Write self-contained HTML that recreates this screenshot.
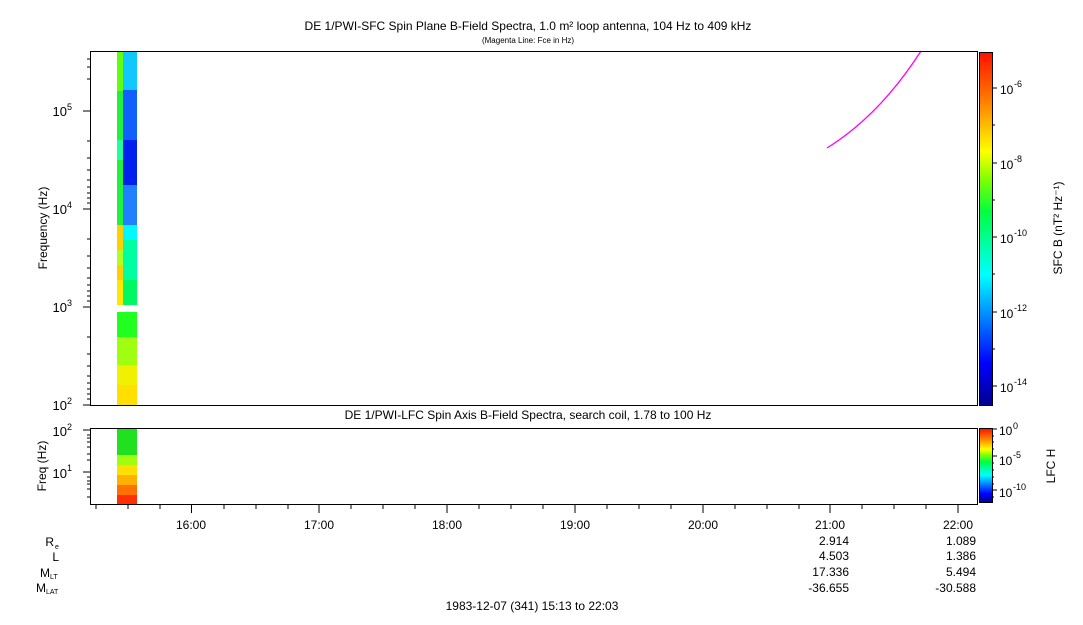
<!DOCTYPE html>
<html><head><style>
body{margin:0;background:#fff;width:1083px;height:620px;overflow:hidden}
svg text{font-family:"Liberation Sans",sans-serif;fill:#000}
</style></head><body>
<svg width="1083" height="620" xmlns="http://www.w3.org/2000/svg">
<defs>
<linearGradient id="jet" x1="0" y1="1" x2="0" y2="0">
<stop offset="0" stop-color="#00008f"/>
<stop offset="0.12" stop-color="#0000ff"/>
<stop offset="0.37" stop-color="#00ffff"/>
<stop offset="0.55" stop-color="#00ff40"/>
<stop offset="0.64" stop-color="#80ff00"/>
<stop offset="0.72" stop-color="#ffff00"/>
<stop offset="0.86" stop-color="#ff8000"/>
<stop offset="1" stop-color="#ff1000"/>
</linearGradient>
</defs>
<text x="528" y="30" font-size="12" text-anchor="middle">DE 1/PWI-SFC  Spin Plane B-Field Spectra, 1.0 m² loop antenna, 104 Hz to 409 kHz</text>
<text x="528" y="43" font-size="8" text-anchor="middle">(Magenta Line: Fce in Hz)</text>

<rect x="117" y="51" width="6" height="254" fill="#20f040"/>
<rect x="117" y="51" width="6" height="40" fill="#60ff10"/>
<rect x="117" y="140" width="6" height="20" fill="#20ffa0"/>
<rect x="117" y="225" width="6" height="80" fill="#ffd000"/>
<rect x="117" y="250" width="6" height="15" fill="#b0ff20"/>
<rect x="117" y="280" width="6" height="25" fill="#ffe800"/>
<rect x="123" y="51" width="14" height="50" fill="#10c8ff"/>
<rect x="123" y="90" width="14" height="70" fill="#1060ff"/>
<rect x="123" y="140" width="14" height="45" fill="#0020f0"/>
<rect x="123" y="185" width="14" height="40" fill="#2080ff"/>
<rect x="123" y="225" width="14" height="15" fill="#00f8ff"/>
<rect x="123" y="240" width="14" height="65" fill="#00ffa0"/>
<rect x="123" y="280" width="14" height="25" fill="#00f860"/>
<rect x="117" y="312" width="20" height="93" fill="#a0ff10"/>
<rect x="117" y="312" width="20" height="25" fill="#20ff20"/>
<rect x="117" y="365" width="20" height="40" fill="#f0f000"/>
<rect x="117" y="385" width="20" height="20" fill="#ffe000"/>
<path d="M827 148 Q880 115 921 51" stroke="#ff00ff" stroke-width="1.3" fill="none"/>
<rect x="90.5" y="51.5" width="887" height="354" fill="none" stroke="#000"/>
<g font-size="13">
<text x="67" y="116" text-anchor="end">10</text><text x="67" y="110" font-size="9">5</text>
<text x="67" y="214" text-anchor="end">10</text><text x="67" y="208" font-size="9">4</text>
<text x="67" y="312" text-anchor="end">10</text><text x="67" y="306" font-size="9">3</text>
<text x="67" y="410" text-anchor="end">10</text><text x="67" y="404" font-size="9">2</text>
</g>
<text x="0" y="0" font-size="12" transform="translate(47 228) rotate(-90)" text-anchor="middle">Frequency (Hz)</text>
<g stroke="#000">
<path d="M90 111h-7M90 209h-7M90 307h-7M90 405h-7"/>
<path d="M90 59h-3M90 67h-3M90 79h-3M90 141h-3M90 158h-3M90 170h-3M90 180h-3M90 187h-3M90 193h-3M90 198h-3M90 203h-3M90 239h-3M90 256h-3M90 268h-3M90 278h-3M90 285h-3M90 291h-3M90 296h-3M90 301h-3M90 337h-3M90 354h-3M90 366h-3M90 376h-3M90 383h-3M90 389h-3M90 394h-3M90 399h-3"/>
</g>
<text x="528" y="419" font-size="12" text-anchor="middle">DE 1/PWI-LFC  Spin Axis B-Field Spectra, search coil, 1.78 to 100 Hz</text>

<rect x="117" y="428" width="20" height="76" fill="#20e020"/>
<rect x="117" y="455" width="20" height="10" fill="#a0ff10"/>
<rect x="117" y="465" width="20" height="10" fill="#ffe000"/>
<rect x="117" y="475" width="20" height="10" fill="#ffb000"/>
<rect x="117" y="485" width="20" height="10" fill="#ff7000"/>
<rect x="117" y="495" width="20" height="9" fill="#ff3000"/>
<rect x="90.5" y="428.5" width="887" height="76" fill="none" stroke="#000"/>
<g font-size="13">
<text x="67" y="436" text-anchor="end">10</text><text x="67" y="430" font-size="9">2</text>
<text x="67" y="478" text-anchor="end">10</text><text x="67" y="471" font-size="9">1</text>
</g>
<text x="0" y="0" font-size="12" transform="translate(46 466) rotate(-90)" text-anchor="middle">Freq (Hz)</text>
<g stroke="#000"><path d="M90 430h-7M90 472h-7M90 435h-3M90 438h-3M90 442h-3M90 447h-3M90 454h-3M90 460h-3M90 477h-3M90 481h-3M90 484h-3M90 489h-3M90 497h-3"/></g>

<g stroke="#000">
<path d="M96 505v4M128 505v4M160 505v4M191.5 505v8M224 505v4M256 505v4M288 505v4M319 505v8M351 505v4M383 505v4M415 505v4M447 505v8M479 505v4M511 505v4M543 505v4M575 505v8M607 505v4M639 505v4M671 505v4M703 505v8M735 505v4M767 505v4M799 505v4M830 505v8M862 505v4M894 505v4M926 505v4M958 505v8"/>
</g>
<g font-size="12" text-anchor="middle">
<text x="191" y="529">16:00</text><text x="319" y="529">17:00</text><text x="447" y="529">18:00</text><text x="575" y="529">19:00</text><text x="703" y="529">20:00</text><text x="830" y="529">21:00</text><text x="958" y="529">22:00</text>
</g>
<g font-size="12">
<text x="54" y="546" text-anchor="end">R</text><text x="55" y="549" font-size="7">e</text>
<text x="59" y="561" text-anchor="end">L</text>
<text x="50" y="577" text-anchor="end">M</text><text x="50" y="579" font-size="7">LT</text>
<text x="46" y="592" text-anchor="end">M</text><text x="46" y="594" font-size="7">LAT</text>
</g>
<g font-size="12" text-anchor="end">
<text x="849" y="545">2.914</text><text x="976" y="545">1.089</text>
<text x="849" y="560">4.503</text><text x="976" y="560">1.386</text>
<text x="849" y="576">17.336</text><text x="976" y="576">5.494</text>
<text x="849" y="592">-36.655</text><text x="976" y="592">-30.588</text>
</g>
<text x="532" y="610" font-size="12" text-anchor="middle">1983-12-07 (341) 15:13 to 22:03</text>

<rect x="979.5" y="52.5" width="13" height="353" fill="url(#jet)" stroke="#000"/>
<g stroke="#000"><path d="M992 88h5M992 125h3M992 163h5M992 200h3M992 237h5M992 274h3M992 312h5M992 349h3M992 386h5"/></g>
<g font-size="12">
<text x="1000" y="94">10</text><text x="1014" y="87" font-size="9">-6</text>
<text x="1000" y="169">10</text><text x="1014" y="162" font-size="9">-8</text>
<text x="1000" y="243">10</text><text x="1014" y="236" font-size="9">-10</text>
<text x="1000" y="318">10</text><text x="1014" y="311" font-size="9">-12</text>
<text x="1000" y="392">10</text><text x="1014" y="385" font-size="9">-14</text>
</g>
<text x="0" y="0" font-size="12" transform="translate(1062 228) rotate(-90)" text-anchor="middle">SFC B (nT² Hz⁻¹)</text>
<rect x="979.5" y="428.5" width="13" height="74" fill="url(#jet)" stroke="#000"/>
<g stroke="#000"><path d="M992 429h5M992 456h5M992 490h5M992 436h2M992 442h2M992 449h2M992 463h2M992 470h2M992 477h2M992 484h2M992 497h2"/></g>
<g font-size="12">
<text x="999" y="435">10</text><text x="1013" y="429" font-size="9">0</text>
<text x="999" y="465">10</text><text x="1013" y="458" font-size="9">-5</text>
<text x="999" y="497">10</text><text x="1013" y="490" font-size="9">-10</text>
</g>
<text x="0" y="0" font-size="12" transform="translate(1055 466) rotate(-90)" text-anchor="middle">LFC H</text>
</svg>
</body></html>
